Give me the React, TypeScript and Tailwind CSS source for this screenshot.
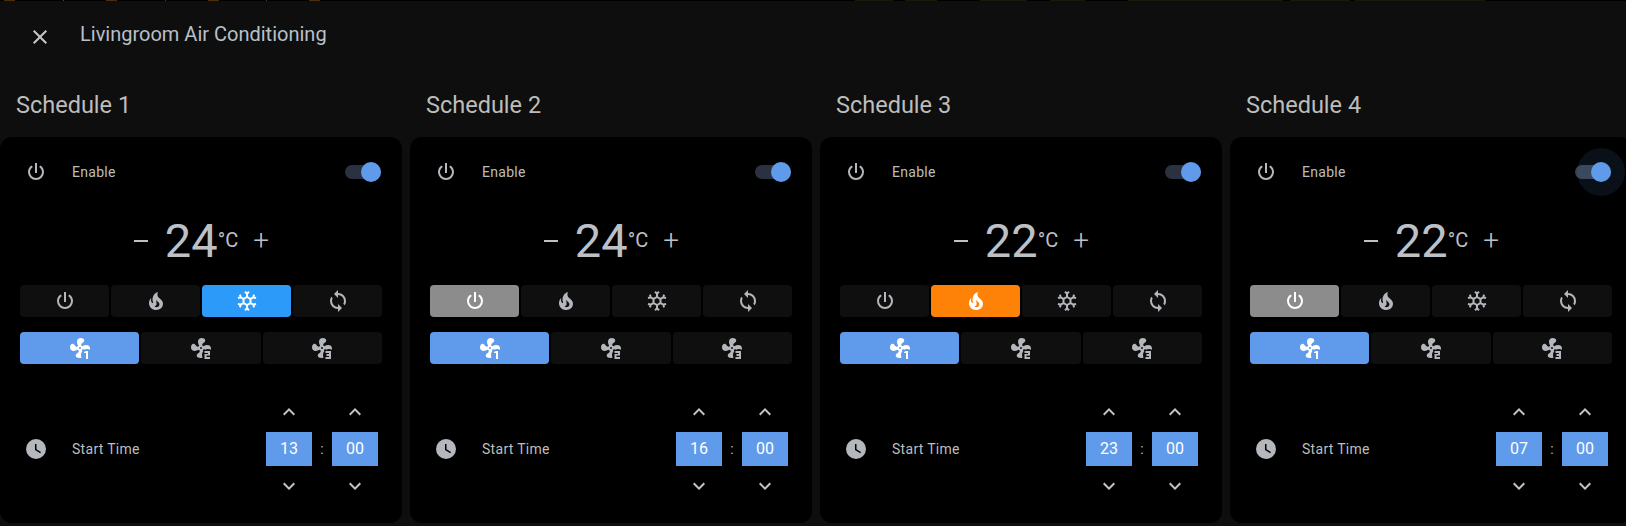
import React from "react";

const P = {
  power: "M16.56,5.44L15.11,6.89C16.84,7.94 18,9.83 18,12A6,6 0 0,1 12,18A6,6 0 0,1 6,12C6,9.83 7.16,7.94 8.88,6.88L7.44,5.44C5.36,6.88 4,9.28 4,12A8,8 0 0,0 12,20A8,8 0 0,0 20,12C20,9.28 18.64,6.88 16.56,5.44M13,3H11V13H13",
  fire: "M17.66 11.2C17.43 10.9 17.15 10.64 16.89 10.38C16.22 9.78 15.46 9.35 14.82 8.72C13.33 7.26 13 4.85 13.95 3C13 3.23 12.17 3.75 11.46 4.32C8.87 6.4 7.85 10.07 9.07 13.22C9.11 13.32 9.15 13.42 9.15 13.55C9.15 13.77 9 13.97 8.8 14.05C8.57 14.15 8.33 14.09 8.14 13.93C8.08 13.88 8.04 13.83 8 13.76C6.87 12.33 6.69 10.28 7.45 8.64C5.78 10 4.87 12.3 5 14.47C5.06 14.97 5.12 15.47 5.29 15.97C5.43 16.57 5.7 17.17 6 17.7C7.08 19.43 8.95 20.67 10.96 20.92C13.1 21.19 15.39 20.8 17.03 19.32C18.86 17.66 19.5 15 18.56 12.72L18.43 12.46C18.22 12 17.66 11.2 17.66 11.2M14.5 17.5C14.22 17.74 13.76 18 13.4 18.1C12.28 18.5 11.16 17.94 10.5 17.28C11.69 17 12.4 16.12 12.61 15.23C12.78 14.43 12.46 13.77 12.33 13C12.21 12.26 12.23 11.63 12.5 10.94C12.69 11.32 12.89 11.7 13.13 12C13.9 13 15.11 13.44 15.37 14.8C15.41 14.94 15.43 15.08 15.43 15.23C15.46 16.05 15.1 16.95 14.5 17.5H14.5Z",
  snow: "M20.79,13.95L18.46,14.57L16.46,13.44V10.56L18.46,9.43L20.79,10.05L21.31,8.12L19.54,7.65L20,5.88L18.07,5.36L17.45,7.69L15.45,8.82L13,7.38V5.12L14.71,3.41L13.29,2L12,3.29L10.71,2L9.29,3.41L11,5.12V7.38L8.5,8.82L6.5,7.69L5.92,5.36L4,5.88L4.47,7.65L2.7,8.12L3.22,10.05L5.55,9.43L7.55,10.56V13.45L5.55,14.58L3.22,13.96L2.7,15.89L4.47,16.36L4,18.12L5.93,18.64L6.55,16.31L8.55,15.18L11,16.62V18.88L9.29,20.59L10.71,22L12,20.71L13.29,22L14.7,20.59L13,18.88V16.62L15.5,15.17L17.5,16.3L18.12,18.63L20,18.12L19.53,16.35L21.3,15.88L20.79,13.95M9.5,10.56L12,9.11L14.5,10.56V13.44L12,14.89L9.5,13.44V10.56Z",
  sync: "M12,18A6,6 0 0,1 6,12C6,11 6.25,10.03 6.7,9.2L5.24,7.74C4.46,8.97 4,10.43 4,12A8,8 0 0,0 12,20V23L16,19L12,15M12,4V1L8,5L12,9V6A6,6 0 0,1 18,12C18,13 17.75,13.97 17.3,14.8L18.76,16.26C19.54,15.03 20,13.57 20,12A8,8 0 0,0 12,4Z",
  fan: "M13,19C13,17.59 13.5,16.3 14.3,15.28C14.17,14.97 14.03,14.65 13.86,14.34C14.26,14 14.57,13.59 14.77,13.11C15.26,13.21 15.78,13.39 16.25,13.67C17.07,13.25 18,13 19,13C20.05,13 21.03,13.27 21.89,13.74C21.95,13.37 22,12.96 22,12.5C22,8.92 18.03,8.13 14.33,10.13C14,9.73 13.59,9.42 13.11,9.22C13.3,8.29 13.74,7.24 14.73,6.75C17.09,5.57 17,2 12.5,2C8.93,2 8.14,5.96 10.13,9.65C9.72,9.97 9.4,10.39 9.21,10.87C8.28,10.68 7.23,10.25 6.73,9.26C5.56,6.89 2,7 2,11.5C2,15.07 5.95,15.85 9.64,13.87C9.96,14.27 10.39,14.59 10.88,14.79C10.68,15.71 10.24,16.75 9.26,17.24C6.9,18.42 7,22 11.5,22C12.31,22 13,21.78 13.5,21.41C13.19,20.67 13,19.86 13,19M12,13A1,1 0 0,1 11,12A1,1 0 0,1 12,11A1,1 0 0,1 13,12A1,1 0 0,1 12,13Z",
  n1: "M18,15H20V23H18V17H16V16Z",
  n2: "M15.5,15H21V19.6H17.5V21H21V23H15.5V18H19V17H15.5Z",
  n3: "M15.5,15H21V23H15.5V21H19V20H16.5V18H19V17H15.5Z",
  clock: "M12,2A10,10 0 0,0 2,12A10,10 0 0,0 12,22A10,10 0 0,0 22,12A10,10 0 0,0 12,2M16.2,16.2L11,13V7H12.5V12.2L17,14.9L16.2,16.2Z",
  up: "M7.41,15.41L12,10.83L16.59,15.41L18,14L12,8L6,14L7.41,15.41Z",
  down: "M7.41,8.58L12,13.17L16.59,8.58L18,10L12,16L6,10L7.41,8.58Z",
  close: "M19,6.41L17.59,5L12,10.59L6.41,5L5,6.41L10.59,12L5,17.59L6.41,19L12,13.41L17.59,19L19,17.59L13.41,12L19,6.41Z",
};

function Icon({ d, className = "" }: { d: string; className?: string }) {
  return (
    <svg viewBox="0 0 24 24" className={`w-6 h-6 fill-current shrink-0 ${className}`}>
      <path d={d} fillRule="evenodd" />
    </svg>
  );
}

const modes = [P.power, P.fire, P.snow, P.sync];
const fans = [P.n1, P.n2, P.n3];

type S = { n: number; temp: number; mode: number; modeCls: string; h: string; halo?: boolean };
const schedules: S[] = [
  { n: 1, temp: 24, mode: 2, modeCls: "bg-[#2b9af9] text-white", h: "13" },
  { n: 2, temp: 24, mode: 0, modeCls: "bg-[#8c8c8c] text-white", h: "16" },
  { n: 3, temp: 22, mode: 1, modeCls: "bg-[#ff8208] text-white", h: "23" },
  { n: 4, temp: 22, mode: 0, modeCls: "bg-[#8c8c8c] text-white", h: "07", halo: true },
];

const specks = [
  { x: 4, w: 11, c: "#4a3006" }, { x: 63, w: 1, c: "#444" }, { x: 106, w: 11, c: "#4a3006" }, { x: 165, w: 1, c: "#444" },
  { x: 208, w: 11, c: "#4a3006" }, { x: 266, w: 1, c: "#444" }, { x: 309, w: 11, c: "#4a3006" },
  { x: 855, w: 38, c: "#141c08" }, { x: 905, w: 32, c: "#141c08" }, { x: 980, w: 47, c: "#141c08" }, { x: 1050, w: 35, c: "#141c08" },
  { x: 1128, w: 155, c: "#141c08" }, { x: 1290, w: 60, c: "#141c08" }, { x: 1355, w: 130, c: "#141c08" },
];

function TimeCol({ v }: { v: string }) {
  return (
    <div className="flex flex-col items-center gap-2 w-[46px]">
      <Icon d={P.up} className="text-[#c4c4c4]" />
      <div className="w-[46px] h-[34px] bg-[#5f9bea] flex items-center justify-center text-[16px] text-white">{v}</div>
      <Icon d={P.down} className="text-[#c4c4c4]" />
    </div>
  );
}

function Card({ s }: { s: S }) {
  return (
    <div className="flex flex-col w-[402px] shrink-0">
      <div className="h-[34px] pl-4 flex items-center text-[23.5px] leading-[34px] text-[#bdbdbd] pt-px">Schedule {s.n}</div>
      <div className="mt-[16px] h-[386px] bg-black rounded-xl pt-[23px] flex flex-col">
        <div className="flex items-center pl-6 pr-[21px] h-6">
          <Icon d={P.power} className="text-[#b4b8bd]" />
          <span className="ml-6 text-[14px] tracking-[0.3px] text-[#bdbdbd]">Enable</span>
          <div className={`ml-auto relative w-[36px] h-[14px] rounded-full ${s.halo ? "bg-[#36404f]" : "bg-[#2a3140]"}`}>
            {s.halo && <div className="absolute w-12 h-12 rounded-full bg-[#5f9bea]/10 -top-[17px] right-[-14px]" />}
            <div className="absolute w-5 h-5 rounded-full bg-[#5f9bea] -top-[3px] right-0" />
          </div>
        </div>
        <div className="mt-[33px] h-12 flex items-center justify-center text-[#bdc1c6]">
          <span className="w-[14px] h-[2px] bg-[#bdc1c6]" />
          <span className="ml-[17px] text-[47px] leading-[48px]">{s.temp}</span>
          <span className="text-[20px] leading-none mb-[2px]">°C</span>
          <span className="ml-[16px] text-[28px] font-light leading-none w-[14px] flex items-center justify-center">+</span>
        </div>
        <div className="mt-[20px] mx-5 grid grid-cols-4 gap-[2px]">
          {modes.map((d, i) => (
            <div key={i} className={`h-8 rounded flex items-center justify-center ${i === s.mode ? s.modeCls : "bg-[#0f0f0f] text-[#b4b8bd]"}`}>
              <Icon d={d} />
            </div>
          ))}
        </div>
        <div className="mt-[15px] mx-5 grid grid-cols-3 gap-[2px]">
          {fans.map((d, i) => (
            <div key={i} className={`h-8 rounded flex items-center justify-center ${i === 0 ? "bg-[#5f9bea] text-white" : "bg-[#0f0f0f] text-[#b4b8bd]"}`}>
              <svg viewBox="0 0 24 24" className="w-6 h-6 fill-current">
                <path d={P.fan} />
                <path d={d} />
              </svg>
            </div>
          ))}
        </div>
        <div className="mt-9 flex items-center pl-6 pr-6">
          <Icon d={P.clock} className="text-[#b4b8bd]" />
          <span className="ml-6 text-[14px] tracking-[0.3px] text-[#bdbdbd]">Start Time</span>
          <div className="ml-auto flex items-center">
            <TimeCol v={s.h} />
            <span className="w-5 text-center text-[14px] text-[#bdbdbd]">:</span>
            <TimeCol v="00" />
          </div>
        </div>
      </div>
    </div>
  );
}

export default function App() {
  return (
    <div className="w-[1626px] h-[526px] overflow-hidden bg-[#0e0e0e] font-['Roboto',sans-serif]">
      <div className="relative h-px bg-black">
        {specks.map((k, i) => (
          <span key={i} className="absolute top-0 h-px" style={{ left: k.x, width: k.w, backgroundColor: k.c }} />
        ))}
      </div>
      <div className="h-[64px] flex items-start pl-7 pt-6">
        <Icon d={P.close} className="text-[#c8c8c8]" />
        <div className="ml-[28px] -mt-[3px] text-[20px] leading-6 text-[#b9c0c8]">Livingroom Air Conditioning</div>
      </div>
      <div className="mt-[22px] flex gap-2">
        {schedules.map((s) => <Card key={s.n} s={s} />)}
      </div>
    </div>
  );
}
